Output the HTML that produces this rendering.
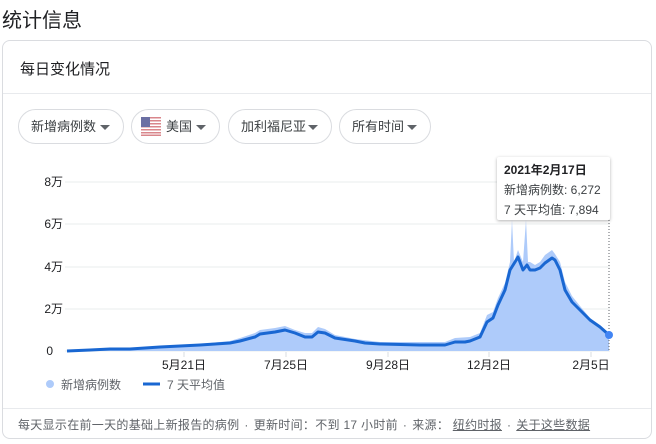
<!DOCTYPE html>
<html><head><meta charset="utf-8"><style>
body{margin:0;width:656px;height:444px;background:#fff;font-family:"Liberation Sans","Noto Sans CJK SC",sans-serif;position:relative;overflow:hidden;color:#202124}
.t{position:absolute;left:2px;top:4px;font-size:20px;color:#202124}
.card{position:absolute;left:2px;top:40px;width:650px;height:399px;border:1px solid #dadce0;border-radius:8px;box-sizing:border-box}
.h{position:absolute;left:17px;top:17px;font-size:15px;color:#202124}
.div1{position:absolute;left:0;right:0;top:52px;border-top:1px solid #e8eaed}
.pill{position:absolute;top:68px;height:35px;border:1px solid #dadce0;border-radius:18px;box-sizing:border-box;font-size:13px;color:#3c4043;line-height:33px;padding-left:12px;white-space:nowrap}
.pill:after{content:"";position:absolute;right:13px;top:15px;border-left:5px solid transparent;border-right:5px solid transparent;border-top:5px solid #5f6368}
.div2{position:absolute;left:0;right:0;top:367px;border-top:1px solid #e8eaed}
.f{position:absolute;left:15px;top:375px;font-size:12px;color:#5f6368;white-space:nowrap;letter-spacing:0.3px}
.f u{color:#5f6368}
.f i{font-style:normal;margin:0 5px}
.tip{position:absolute;left:497px;top:157px;width:113px;height:63px;background:#fff;box-shadow:0 1px 3px rgba(0,0,0,.3);border-radius:2px;font-size:12px;color:#3c4043;padding:3px 7px;box-sizing:border-box;line-height:20px;white-space:nowrap}
</style></head><body>
<div class="t">统计信息</div>
<div class="card">
<div class="h">每日变化情况</div>
<div class="div1"></div>
<div class="pill" style="left:15px;width:106px">新增病例数</div>
<div class="pill" style="left:128px;width:89px;padding-left:34px">美国<svg style="position:absolute;left:9px;top:7px" width="20" height="19" viewBox="0 0 20 19"><rect width="20" height="19" fill="#fff"/><g fill="#d9868b"><rect y="0" width="20" height="1.5"/><rect y="3" width="20" height="1.5"/><rect y="6" width="20" height="1.5"/><rect y="9" width="20" height="1.5"/><rect y="12" width="20" height="1.5"/><rect y="15" width="20" height="1.5"/><rect y="17.5" width="20" height="1.5"/></g><rect width="9" height="10" fill="#6b6fa3"/></svg></div>
<div class="pill" style="left:225px;width:104px">加利福尼亚</div>
<div class="pill" style="left:336px;width:92px">所有时间</div>
<div class="div2"></div>
<div class="f">每天显示在前一天的基础上新报告的病例<i>·</i>更新时间：不到 17 小时前<i>·</i>来源： <u>纽约时报</u><i>·</i><u>关于这些数据</u></div>
</div>
<svg style="position:absolute;left:0;top:0" width="656" height="444">
<g stroke="#f1f3f4" stroke-width="1.5"><line x1="65" y1="182" x2="610" y2="182"/><line x1="65" y1="224" x2="610" y2="224"/><line x1="65" y1="267" x2="610" y2="267"/><line x1="65" y1="309" x2="610" y2="309"/><line x1="65" y1="351" x2="610" y2="351"/></g>
<g font-size="12" fill="#202124" text-anchor="end"><text x="63" y="186">8万</text><text x="63" y="228">6万</text><text x="63" y="271">4万</text><text x="63" y="313">2万</text><text x="53" y="355">0</text></g>
<polygon fill="#aecbfa" points="67,351 67,350 130,348 200,344 230,341 240,338 255,333 260,330 275,328 285,326 295,330 305,333 312,333 318,327 325,329 335,335 355,339 380,342 420,342 445,342 455,338 470,337 480,333 487,315 493,312 498,298 505,283 510,262 512,220 514,262 518,250 523,262 526,220 528,262 530,262 535,265 540,262 545,255 552,250 555,254 560,262 565,282 572,296 580,306 590,318 600,325 609,333 609,351"/>
<line x1="609" y1="220" x2="609" y2="351" stroke="#5f6368" stroke-dasharray="1,2"/>
<polyline fill="none" stroke="#1967d2" stroke-width="3" stroke-linejoin="round" points="67,351 90,350 110,349 130,349 160,347 200,345 230,343 240,341 255,337 260,334 275,332 285,330 295,333 305,337 312,337 318,332 325,333 335,338 355,341 365,343 380,344 420,345 445,345 455,342 465,342 470,341 480,337 487,322 493,318 498,305 505,290 510,270 515,262 518,257 523,270 527,265 530,270 535,270 540,268 545,263 552,258 555,260 560,270 565,290 572,302 580,310 590,320 600,327 609,335"/>
<circle cx="609" cy="335" r="4" fill="#4285f4"/>
<g stroke="#dadce0"><line x1="184" y1="352" x2="184" y2="357"/><line x1="286" y1="352" x2="286" y2="357"/><line x1="388" y1="352" x2="388" y2="357"/><line x1="489" y1="352" x2="489" y2="357"/><line x1="591" y1="352" x2="591" y2="357"/></g>
<g font-size="12" fill="#202124" text-anchor="middle"><text x="184" y="369">5月21日</text><text x="286" y="369">7月25日</text><text x="388" y="369">9月28日</text><text x="489" y="369">12月2日</text><text x="591" y="369">2月5日</text></g>
<circle cx="50" cy="384" r="4" fill="#aecbfa"/>
<text x="61" y="389" font-size="12" fill="#5f6368">新增病例数</text>
<line x1="143" y1="384" x2="160" y2="384" stroke="#1967d2" stroke-width="3"/>
<text x="167" y="389" font-size="12" fill="#5f6368">7 天平均值</text>
</svg>
<div class="tip"><b style="color:#202124">2021年2月17日</b><br>新增病例数: 6,272<br>7 天平均值: 7,894</div>
</body></html>
